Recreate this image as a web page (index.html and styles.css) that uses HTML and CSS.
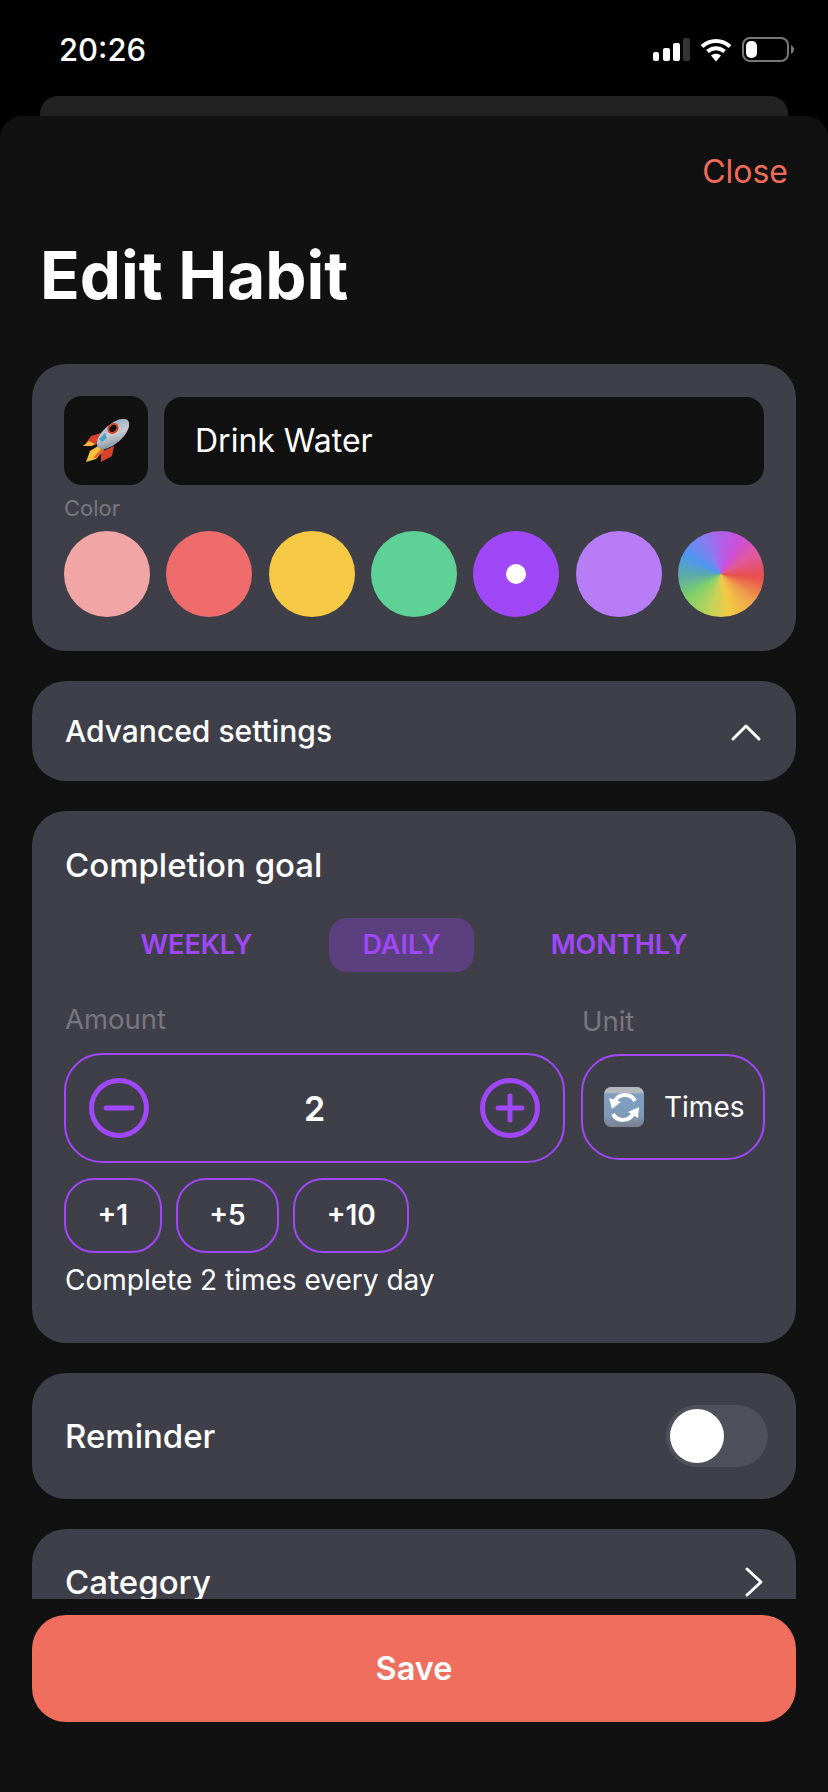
FILE: index.html
```html
<!DOCTYPE html>
<html lang="en">
<head>
<meta charset="UTF-8">
<meta name="viewport" content="width=device-width, initial-scale=1.0">
<title>Edit Habit</title>
<link rel="stylesheet" href="styles.css">
</head>
<body>

<div class="status-bar">
    <span class="time">20:26</span>
    <div class="status-icons">
        <svg width="37" height="23" viewBox="0 0 37 23">
            <rect x="0" y="14" width="6" height="9" rx="2" fill="#fff"/>
            <rect x="10" y="10" width="7" height="13" rx="2" fill="#fff"/>
            <rect x="20" y="5" width="7" height="18" rx="2" fill="#fff"/>
            <rect x="30" y="0" width="7" height="23" rx="2" fill="#333"/>
        </svg>
        <svg width="32" height="24" viewBox="0 0 32 24">
            <path d="M2 8.5 C10 1 22 1 30 8.5" fill="none" stroke="#fff" stroke-width="4"/>
            <path d="M7.5 13.5 C12.5 9 19.5 9 24.5 13.5" fill="none" stroke="#fff" stroke-width="4"/>
            <path d="M11 17.5 C14 15 18 15 21 17.5 L16 23.5 Z" fill="#fff"/>
        </svg>
        <svg width="52" height="25" viewBox="0 0 52 25">
            <rect x="1" y="1" width="45" height="23" rx="7" fill="none" stroke="#77777a" stroke-width="2"/>
            <rect x="4" y="4" width="11" height="17" rx="5" fill="#fff"/>
            <path d="M49 8 C51 9 52 11 52 12.5 C52 14 51 16 49 17 Z" fill="#77777a"/>
        </svg>
    </div>
</div>

<div class="back-card"></div>

<div class="sheet">
    <div class="sheet-top">
        <a class="close-link">Close</a>
    </div>
    <h1 class="title">Edit Habit</h1>

    <div class="scroll-area">
        <div class="card name-card">
            <div class="name-row">
                <div class="icon-box">
                    <svg width="46" height="43" viewBox="0 0 46 43">
                        <defs>
                            <linearGradient id="hull" x1="0" y1="1" x2="1" y2="0">
                                <stop offset="0" stop-color="#6f7f92"/>
                                <stop offset="0.5" stop-color="#c9ccd1"/>
                                <stop offset="1" stop-color="#8fa9c9"/>
                            </linearGradient>
                        </defs>
                        <path d="M18 14 L8 17 L3 24 L13 26 Z" fill="#d8412a"/>
                        <path d="M6 22 L0 27 L9 27 L12 25 Z" fill="#f5b73c"/>
                        <path d="M31 27 L29 37 L18 43 L18 33 Z" fill="#d8412a"/>
                        <path d="M15 27 L7 32 L3 43 L13 40 L21 31 Z" fill="#f7c13f"/>
                        <path d="M13 39 L21 31 L19 29 L10 39 Z" fill="#e0672b"/>
                        <ellipse cx="30" cy="15" rx="20" ry="9.5" transform="rotate(-42 30 15)" fill="url(#hull)"/>
                        <path d="M16 20 L22 14 L24 19 L19 23 Z" fill="#4f9fc4"/>
                        <ellipse cx="30" cy="9.500" rx="5" ry="4" transform="rotate(-42 30 9.500)" fill="#111" stroke="#d8412a" stroke-width="2"/>
                    </svg>
                </div>
                <div class="name-input">Drink Water</div>
            </div>
            <div class="field-label color-label">Color</div>
            <div class="swatches">
                <div class="swatch pink"></div>
                <div class="swatch red"></div>
                <div class="swatch yellow"></div>
                <div class="swatch green"></div>
                <div class="swatch purple"><span class="swatch-dot"></span></div>
                <div class="swatch lilac"></div>
                <div class="swatch rainbow"></div>
            </div>
        </div>

        <div class="card row-card advanced-card">
            <span class="card-heading small">Advanced settings</span>
            <svg class="chevron-up" width="32" height="20" viewBox="0 0 32 20">
                <path d="M3 17 L16 4 L29 17" fill="none" stroke="#fff" stroke-width="3" stroke-linecap="round" stroke-linejoin="round"/>
            </svg>
        </div>

        <div class="card goal-card">
            <div class="card-heading goal-heading">Completion goal</div>
            <div class="tabs">
                <span class="tab">WEEKLY</span>
                <span class="tab active">DAILY</span>
                <span class="tab">MONTHLY</span>
            </div>
            <div class="goal-grid">
                <div class="amount-col">
                    <div class="field-label big">Amount</div>
                    <div class="stepper">
                        <svg width="60" height="60" viewBox="0 0 60 60">
                            <circle cx="30" cy="30" r="27.500" fill="none" stroke="#a047f7" stroke-width="5"/>
                            <path d="M17 30 H43" stroke="#a047f7" stroke-width="5" stroke-linecap="round"/>
                        </svg>
                        <span class="stepper-value">2</span>
                        <svg width="60" height="60" viewBox="0 0 60 60">
                            <circle cx="30" cy="30" r="27.500" fill="none" stroke="#a047f7" stroke-width="5"/>
                            <path d="M18 30 H42 M30 18 V42" stroke="#a047f7" stroke-width="5" stroke-linecap="round"/>
                        </svg>
                    </div>
                </div>
                <div class="unit-col">
                    <div class="field-label big">Unit</div>
                    <div class="unit-box">
                        <svg width="40" height="40" viewBox="0 0 40 40">
                            <defs>
                                <linearGradient id="tile" x1="0" y1="0" x2="0" y2="1">
                                    <stop offset="0" stop-color="#b4b8bf"/>
                                    <stop offset="0.14" stop-color="#b4b8bf"/>
                                    <stop offset="0.17" stop-color="#7f9fc2"/>
                                    <stop offset="0.7" stop-color="#7f9bb9"/>
                                    <stop offset="1" stop-color="#7c7f8c"/>
                                </linearGradient>
                            </defs>
                            <rect width="40" height="40" rx="7" fill="url(#tile)"/>
                            <path d="M31 14 C27 6 15 6 11 14" fill="none" stroke="#fff" stroke-width="4"/>
                            <path d="M5 11 L17 15 L8 22 Z" fill="#fff"/>
                            <path d="M9 27 C13 35 25 35 30 26" fill="none" stroke="#fff" stroke-width="4"/>
                            <path d="M35 20 L24 25 L34 31 Z" fill="#fff"/>
                        </svg>
                        <span>Times</span>
                    </div>
                </div>
            </div>
            <div class="chips">
                <span class="chip">+1</span>
                <span class="chip">+5</span>
                <span class="chip">+10</span>
            </div>
            <p class="goal-text">Complete 2 times every day</p>
        </div>

        <div class="card row-card reminder-card">
            <span class="card-heading">Reminder</span>
            <div class="toggle"><span class="toggle-thumb"></span></div>
        </div>

        <div class="card row-card category-card">
            <span class="card-heading">Category</span>
            <svg width="20" height="32" viewBox="0 0 20 32">
                <path d="M3 3 L17 16 L3 29" fill="none" stroke="#fff" stroke-width="3" stroke-linecap="round" stroke-linejoin="round"/>
            </svg>
        </div>
    </div>

    <div class="footer">
        <button class="save-btn">Save</button>
    </div>
</div>

</body>
</html>
```

FILE: styles.css
```css
* {
    box-sizing: border-box;
}
body {
    font-family: Inter, "Liberation Sans", sans-serif;
    background-color: #000;
    color: #fff;
    height: 100vh;
    margin: 0;
    display: flex;
    flex-direction: column;
    overflow: hidden;
}
.status-bar {
    height: 96px;
    flex: none;
    display: flex;
    justify-content: space-between;
    align-items: flex-start;
    padding: 30px 34px 0 59px;
}
.time {
    font-size: 31px;
    line-height: 40px;
    font-weight: 500;
}
.status-icons {
    display: flex;
    align-items: center;
    gap: 10px;
    padding-top: 7px;
}
.back-card {
    height: 20px;
    flex: none;
    margin: 0 40px;
    background-color: #222;
    border-radius: 18px 18px 0 0;
}
.sheet {
    flex: 1;
    min-height: 0;
    display: flex;
    flex-direction: column;
    background-color: #111;
    border-radius: 22px 22px 0 0;
}
.sheet-top {
    display: flex;
    justify-content: flex-end;
    padding: 36px 40px 0;
}
.close-link {
    font-size: 32px;
    line-height: 40px;
    color: #ef6c5c;
}
.title {
    margin: 44px 0 48px 40px;
    font-size: 65.5px;
    line-height: 80px;
    font-weight: 700;
}
.scroll-area {
    flex: 1;
    min-height: 0;
    overflow: hidden;
    display: flex;
    flex-direction: column;
    gap: 30px;
    padding: 0 32px;
}
.card {
    flex: none;
    background-color: #3f3f4a;
    border-radius: 34px;
}
.name-card {
    height: 287px;
    padding: 32px;
}
.name-row {
    display: flex;
    gap: 16px;
}
.icon-box {
    width: 84px;
    height: 89px;
    background-color: #111;
    border-radius: 18px;
    display: flex;
    align-items: center;
    justify-content: center;
}
.name-input {
    flex: 1;
    height: 88px;
    margin-top: 1px;
    background-color: #111;
    border-radius: 18px;
    padding-left: 31px;
    font-size: 32px;
    line-height: 88px;
}
.field-label {
    color: #77777f;
    font-size: 22px;
    line-height: 36px;
}
.field-label.big {
    font-size: 27.5px;
}
.color-label {
    margin-top: 5px;
    margin-bottom: 5px;
}
.swatches {
    display: flex;
    justify-content: space-between;
}
.swatch {
    width: 86px;
    height: 86px;
    border-radius: 50%;
    display: flex;
    align-items: center;
    justify-content: center;
}
.pink { background-color: #f2a5a5; }
.red { background-color: #ef6c6c; }
.yellow { background-color: #f5c944; }
.green { background-color: #5ed197; }
.purple { background-color: #a047f7; }
.lilac { background-color: #b97cf7; }
.rainbow {
    background: conic-gradient(#b060e8 0deg, #cf4fd8 30deg, #e0589a 60deg, #e8504c 95deg, #ee9f4c 130deg, #f5c944 165deg, #c4d35a 195deg, #7fd06a 235deg, #5aa9a8 268deg, #4f96f2 300deg, #8a7cf0 335deg, #b060e8 360deg);
}
.swatch-dot {
    width: 20px;
    height: 20px;
    border-radius: 50%;
    background-color: #fff;
}
.row-card {
    display: flex;
    justify-content: space-between;
    align-items: center;
}
.card-heading {
    font-size: 33px;
    line-height: 36px;
    font-weight: 500;
}
.card-heading.small {
    font-size: 30px;
}
.advanced-card {
    height: 100px;
    padding: 0 34px 0 33px;
}
.chevron-up {
    margin-top: 2px;
}
.goal-card {
    height: 532px;
    padding: 36px 32px 0;
}
.goal-heading {
    margin-left: 1px;
}
.tabs {
    display: flex;
    justify-content: center;
    gap: 44px;
    margin-top: 35px;
}
.tab {
    height: 54px;
    padding: 0 33px;
    border-radius: 18px;
    color: #a047f7;
    font-size: 27px;
    line-height: 54px;
    font-weight: 600;
}
.tab.active {
    background-color: #5b3f7e;
}
.goal-grid {
    display: grid;
    grid-template-columns: 501px 184px;
    gap: 16px;
    margin-top: 29px;
}
.amount-col .field-label {
    margin-left: 1px;
    margin-bottom: 16px;
}
.unit-col {
    padding-top: 2px;
}
.unit-col .field-label {
    margin-left: 1px;
    margin-bottom: 15px;
}
.stepper {
    height: 110px;
    border: 2px solid #a047f7;
    border-radius: 38px;
    display: flex;
    justify-content: space-between;
    align-items: center;
    padding: 0 23px;
}
.stepper-value {
    font-size: 34px;
    font-weight: 600;
}
.unit-box {
    height: 106px;
    border: 2px solid #a047f7;
    border-radius: 38px;
    display: flex;
    align-items: center;
    gap: 20px;
    padding-left: 21px;
    font-size: 28px;
}
.chips {
    display: flex;
    gap: 14px;
    margin-top: 15px;
}
.chip {
    height: 75px;
    border: 2px solid #a047f7;
    border-radius: 30px;
    padding: 0 31.5px;
    font-size: 28px;
    line-height: 71px;
    font-weight: 600;
}
.goal-text {
    margin: 9px 0 0 1px;
    font-size: 28px;
    line-height: 36px;
}
.reminder-card {
    height: 126px;
    padding: 0 28px 0 33px;
}
.toggle {
    width: 102px;
    height: 62px;
    padding: 4px;
    border-radius: 31px;
    background-color: #50505c;
}
.toggle-thumb {
    display: block;
    width: 54px;
    height: 54px;
    border-radius: 50%;
    background-color: #fff;
}
.category-card {
    height: 106px;
    padding: 0 32px 0 33px;
}
.footer {
    flex: none;
    height: 193px;
    padding: 16px 32px 70px;
}
.save-btn {
    display: block;
    width: 100%;
    height: 107px;
    border: none;
    border-radius: 34px;
    background-color: #ef6e5e;
    color: #fff;
    font-family: inherit;
    font-size: 32.5px;
    font-weight: 600;
}
```
